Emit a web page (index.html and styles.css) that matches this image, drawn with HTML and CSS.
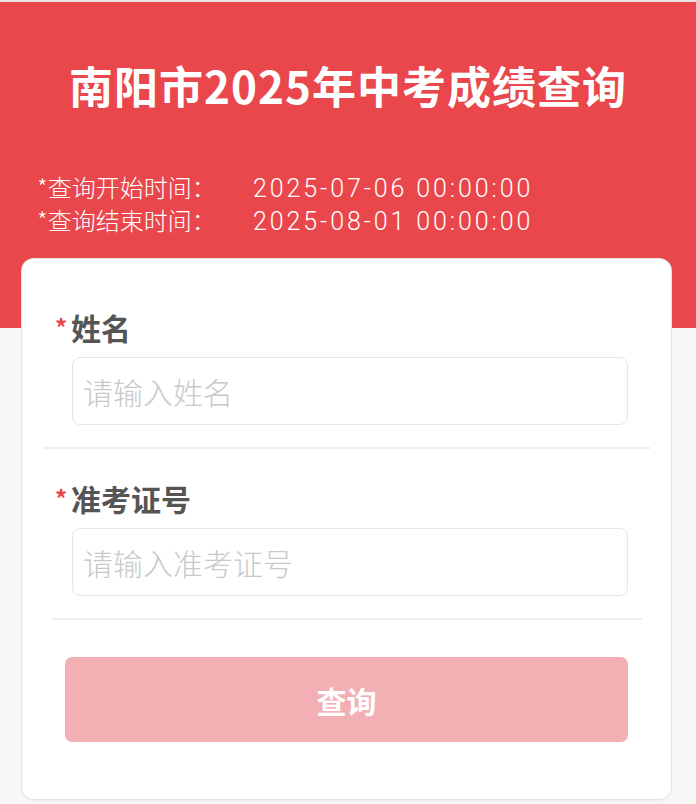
FILE: index.html
```html
<!DOCTYPE html>
<html lang="zh-CN">
<head>
<meta charset="utf-8">
<title>南阳市2025年中考成绩查询</title>
<link rel="stylesheet" href="styles.css">
</head>
<body>
<div class="topline"></div>
<header class="header">
  <h1 class="title">南阳市2025年中考成绩查询</h1>
  <div class="info">
    <div class="info-row"><span class="info-key">*查询开始时间：</span><span class="info-val">2025-07-06 00:00:00</span></div>
    <div class="info-row"><span class="info-key">*查询结束时间：</span><span class="info-val">2025-08-01 00:00:00</span></div>
  </div>
</header>
<main class="card">
  <div class="field">
    <label class="label"><span class="req">*</span>姓名</label>
    <input class="input" type="text" placeholder="请输入姓名">
  </div>
  <div class="sep sep-a"></div>
  <div class="field field-2">
    <label class="label"><span class="req">*</span>准考证号</label>
    <input class="input" type="text" placeholder="请输入准考证号">
  </div>
  <div class="sep sep-b"></div>
  <button class="btn" type="button">查询</button>
</main>
</body>
</html>
```
FILE: styles.css
```css
* { box-sizing: border-box; }
html, body { margin: 0; padding: 0; }
body {
  background: #f7f7f8;
  font-family: "Noto Sans CJK SC", "Noto Sans", sans-serif;
  width: 696px;
  height: 804px;
  overflow: hidden;
}
.topline { height: 2px; background: #e9e2e2; }
.header {
  background: #e9474c;
  height: 326px;
  padding-top: 55px;
  color: #fff;
}
.title {
  margin: 0;
  text-align: center;
  font-size: 44px;
  line-height: 56px;
  font-weight: 700;
  letter-spacing: 1px;
}
.info {
  margin-top: 57px;
  padding-left: 37px;
  font-size: 24px;
  line-height: 33px;
  font-weight: 300;
}
.info-row { display: flex; align-items: baseline; white-space: nowrap; height: 33px; }
.info-key { width: 216px; }
.info-val {
  font-family: Roboto, "Noto Sans", sans-serif;
  font-weight: 300;
  font-size: 25px;
  letter-spacing: 2.9px;
}
.card {
  margin: -69px 25px 0 22px;
  background: #fff;
  border-radius: 12px;
  box-shadow: 0 0 0 1px #e4e4e4, 0 1px 3px rgba(0,0,0,0.08);
  padding: 48px 0 57px;
  display: flex;
  flex-direction: column;
}
.field { display: flex; flex-direction: column; padding: 0 43px 0 33px; }
.field-2 { margin-top: 29px; }
.label {
  font-size: 30px;
  line-height: 40px;
  font-weight: 700;
  color: #555;
  display: flex;
  align-items: flex-start;
}
.req {
  color: #e9474c;
  font-size: 24px;
  line-height: 40px;
  font-weight: 700;
  width: 16px;
}
.input {
  margin-top: 10px;
  margin-left: 17px;
  height: 68px;
  border: 1px solid #e6e6e6;
  border-radius: 8px;
  padding: 0 10px;
  font-family: "Noto Sans CJK SC", sans-serif;
  font-size: 30px;
  font-weight: 300;
  color: #333;
  outline: none;
  background: #fff;
}
.input::placeholder { color: #c9c9c9; }
.sep { height: 2px; background: #ededed; }
.sep-a { margin: 22px 21px 0 22px; }
.sep-b { margin: 22px 29px 0 31px; }
.btn {
  margin: 37px 43px 0 43px;
  height: 85px;
  border: none;
  border-radius: 7px;
  background: #f2b0b4;
  color: #fff;
  font-family: "Noto Sans CJK SC", sans-serif;
  font-size: 30px;
  font-weight: 700;
}
```
